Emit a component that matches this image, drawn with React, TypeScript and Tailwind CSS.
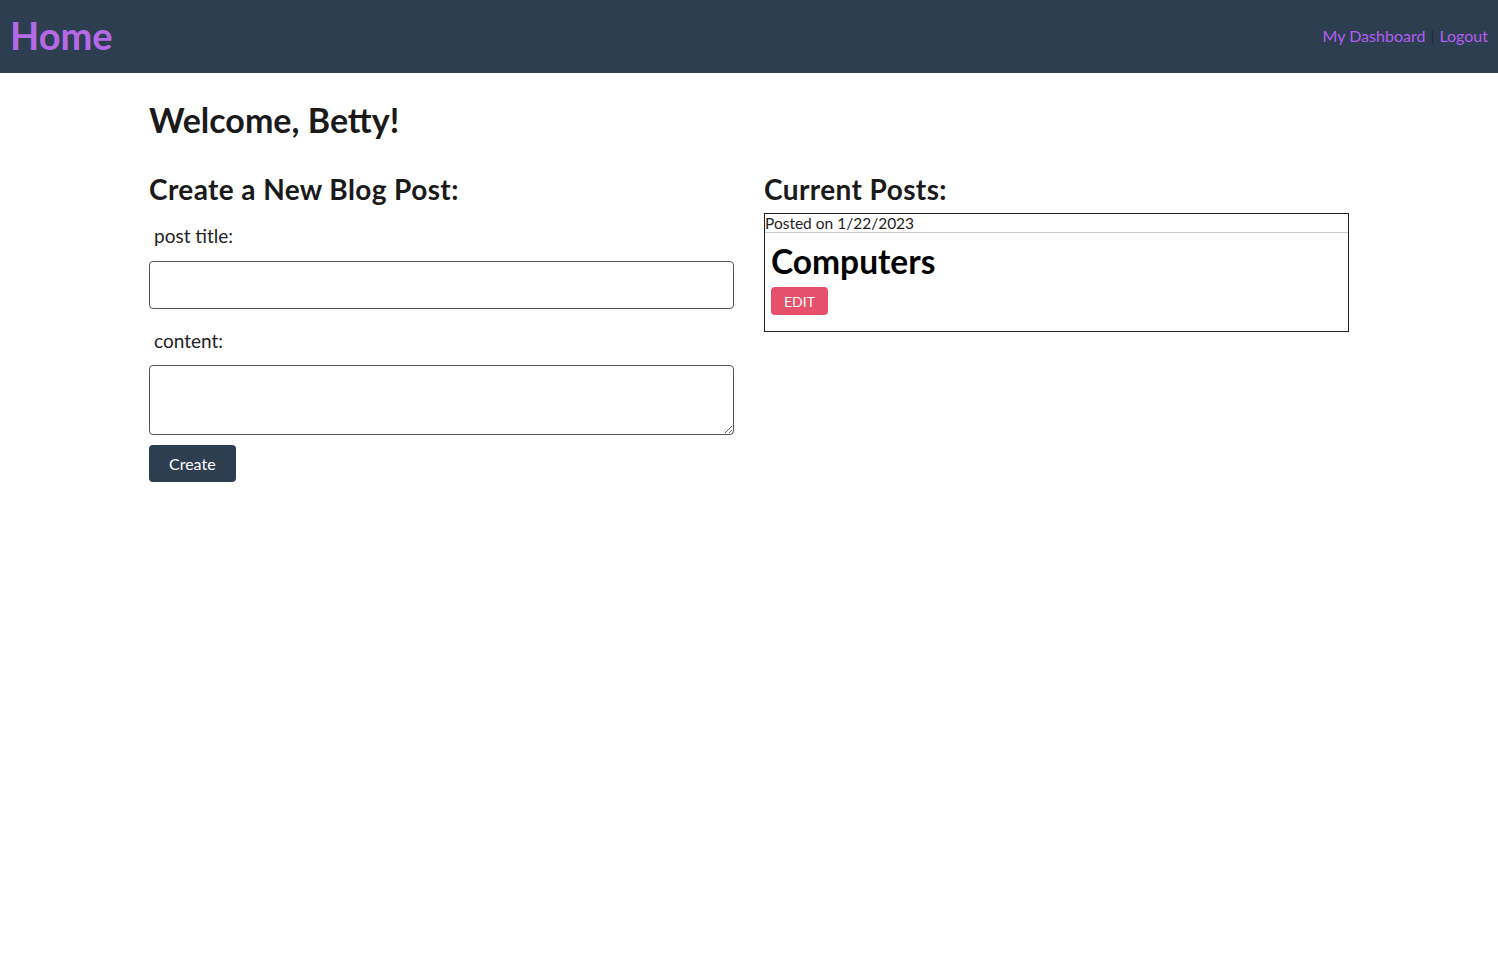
import React from "react";

const FONT = { fontFamily: '"Segoe UI", Lato, "Noto Sans", sans-serif' };

function Header() {
    return (
        <header className="flex h-[73px] items-center justify-between bg-[#2e3e51] pl-[10px] pr-[10px]">
            <a className="-mt-[4px] text-[38px] font-bold leading-none text-[#b46ae6]">Home</a>
            <nav className="-mt-[2px] flex items-center text-[16px]">
                <a className="text-[#b15ff0]">My Dashboard</a>
                <span className="mx-[5px] text-[#1f2937]">|</span>
                <a className="text-[#b15ff0]">Logout</a>
            </nav>
        </header>
    );
}

function NewPostForm() {
    return (
        <form className="flex flex-col" onSubmit={(e) => e.preventDefault()}>
            <h2 className="text-[28px] font-bold leading-none tracking-[0.4px] text-[#1a1a1a] mt-[2px]">Create a New Blog Post:</h2>
            <label className="ml-[5px] mt-[21px] text-[19px] leading-[24px] text-[#222]">post title:</label>
            <input
                type="text"
                className="mt-[13px] h-[48px] w-full rounded-[4px] border border-[#555] px-2"
            />
            <label className="ml-[5px] mt-[20px] text-[19px] leading-[24px] text-[#222]">content:</label>
            <textarea
                rows={3}
                className="mt-[12px] h-[70px] w-full rounded-[4px] border border-[#555] px-2"
            ></textarea>
            <div>
                <button className="mt-[10px] h-[37px] rounded-[4px] bg-[#2e3e51] px-[20px] text-[16px] text-white">
                    Create
                </button>
            </div>
        </form>
    );
}

function PostCard() {
    return (
        <div className="mt-[10px] border border-[#222] pb-[16px]">
            <div className="border-b border-[#ccc] text-[15.5px] leading-[18px] text-[#222]">Posted on 1/22/2023</div>
            <div className="px-[6px]">
                <h3 className="mt-[10px] text-[33.5px] font-bold leading-[36px] text-black">Computers</h3>
                <button className="mt-[8px] h-[28px] rounded-[4px] bg-[#e5506a] px-[13px] text-[14px] text-white">
                    EDIT
                </button>
            </div>
        </div>
    );
}

export default function App() {
    return (
        <div className="min-h-screen bg-white" style={FONT}>
            <Header />
            <main className="mx-auto w-[1200px] pt-[30px]">
                <h1 className="text-[34px] font-bold leading-none text-[#1a1a1a]">Welcome, Betty!</h1>
                <div className="mt-[36px] grid grid-cols-2 gap-[30px]">
                    <NewPostForm />
                    <div>
                        <h2 className="text-[28px] font-bold leading-none tracking-[0.4px] text-[#1a1a1a] mt-[2px]">Current Posts:</h2>
                        <PostCard />
                    </div>
                </div>
            </main>
        </div>
    );
}
